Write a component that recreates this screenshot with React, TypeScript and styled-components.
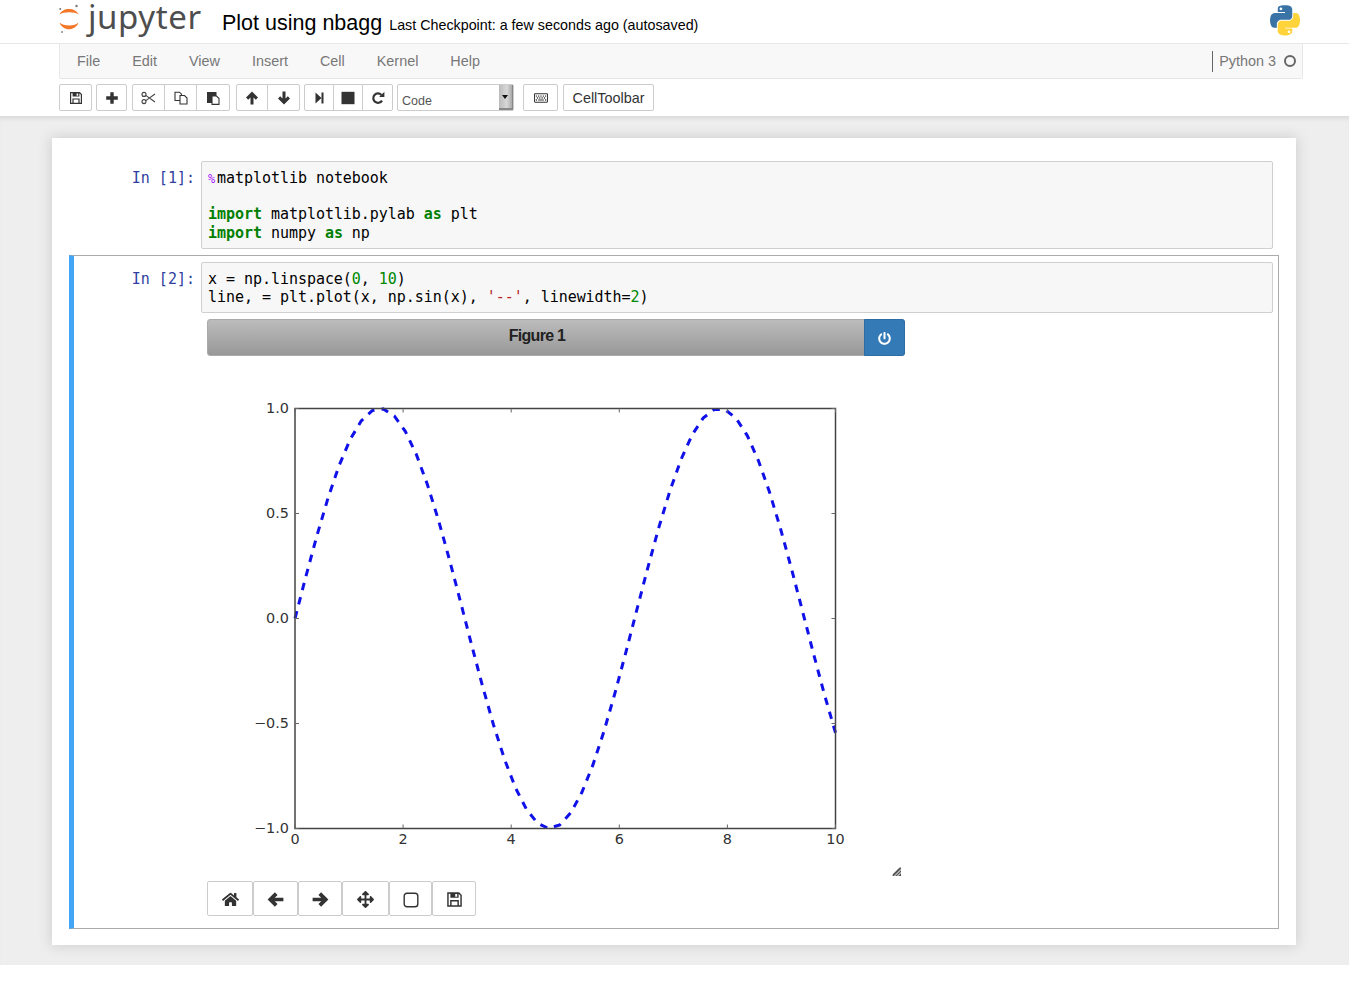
import React from "react";
import styled, { createGlobalStyle } from "styled-components";
import { FaRegKeyboard, FaHome, FaArrowsAlt, FaPowerOff } from "react-icons/fa";

const GlobalStyle = createGlobalStyle`
  html, body { margin: 0; padding: 0; background: #fff; overflow: hidden; }
  body { font-family: "Liberation Sans", Arial, sans-serif; color: #000; }
`;

const MONO = `"DejaVu Sans Mono", "Liberation Mono", monospace`;

const menuItems = ["File", "Edit", "View", "Insert", "Cell", "Kernel", "Help"];

// plot geometry, in the coordinates of the canvas below the figure title
const AX = { left: 88, right: 628.5, top: 52.5, bottom: 472.5 };

const sinePath = () => {
  const pts: string[] = [];
  for (let i = 0; i < 50; i++) {
    const x = (i * 10) / 49;
    const px = AX.left + (x / 10) * (AX.right - AX.left);
    const py = AX.top + ((1 - Math.sin(x)) / 2) * (AX.bottom - AX.top);
    pts.push(`${i === 0 ? "M" : "L"}${px.toFixed(2)} ${py.toFixed(2)}`);
  }
  return pts.join(" ");
};

const LEFT_ARROW = "M0.5 7L6.5 1L8.7 3.2L6.4 5.5H13.5V8.5H6.4L8.7 10.8L6.5 13Z";

// font-awesome 4 style glyphs, these are heavier than what the icon packs have
const SaveIcon: React.FC<{ size?: number }> = ({ size = 14 }) => (
  <svg width={size} height={size} viewBox="0 0 14 14">
    <path
      fillRule="evenodd"
      fill="#333"
      d="M1 1H10.8L13 3.2V13H1ZM2.2 2.2V11.8H3.4V7.4H10.6V11.8H11.8V3.7L10.4 2.3V5.6H3.6V2.2ZM4.6 8.6V11.8H9.4V8.6ZM7.6 2.4V4.8H9.2V2.4Z"
    />
  </svg>
);

const PlusIcon = () => (
  <svg width="14" height="14" viewBox="0 0 14 14">
    <path fill="#333" d="M5.3 1.2h3.4v4.1h4.1v3.4h-4.1v4.1h-3.4v-4.1h-4.1v-3.4h4.1z" />
  </svg>
);

const ScissorsIcon = () => (
  <svg width="15" height="14" viewBox="0 0 15 14" fill="none" stroke="#444" strokeWidth="1.1">
    <circle cx="3" cy="3.4" r="2" />
    <circle cx="3" cy="10.6" r="2" />
    <path d="M4.8 4.4L14 11M4.8 9.6L14 3" />
  </svg>
);

const CopyIcon = () => (
  <svg width="14" height="14" viewBox="0 0 14 14" fill="#fff" stroke="#333" strokeWidth="1.1">
    <path d="M1 1.2H5.5L7.5 3.2V9.5H1Z" />
    <path d="M6 4.5H10.5L13 7V13H6Z" />
  </svg>
);

const PasteIcon = () => (
  <svg width="14" height="14" viewBox="0 0 14 14">
    <rect x="1" y="1" width="9.5" height="11" fill="#333" />
    <path d="M6 5H10.5L13 7.5V13.4H6Z" fill="#fff" stroke="#333" strokeWidth="1.1" />
  </svg>
);

const ArrowIcon: React.FC<{ turn: number; size?: number }> = ({ turn, size = 14 }) => (
  <svg width={size} height={size} viewBox="0 0 14 14">
    <path fill="#333" d={LEFT_ARROW} transform={`rotate(${turn} 7 7)`} />
  </svg>
);

const StepIcon = () => (
  <svg width="14" height="14" viewBox="0 0 14 14">
    <path fill="#333" d="M3.5 1.5L9.5 7L3.5 12.5ZM9.5 1.5H11.5V12.5H9.5Z" />
  </svg>
);

const StopIcon = () => (
  <svg width="14" height="14" viewBox="0 0 14 14">
    <rect x="0.5" y="0.8" width="13" height="12.4" fill="#333" />
  </svg>
);

const RepeatIcon = () => (
  <svg width="14" height="14" viewBox="0 0 14 14">
    <path d="M11 9.6A4.7 4.7 0 1 1 10.4 3.9" fill="none" stroke="#333" strokeWidth="2.2" />
    <path d="M8.2 6L13.4 6L13.4 0.8Z" fill="#333" />
  </svg>
);

const SquareIcon = () => (
  <svg width="16" height="16" viewBox="0 0 16 16">
    <rect x="1.2" y="1.2" width="13.6" height="13.6" rx="2.8" fill="none" stroke="#333" strokeWidth="1.4" />
  </svg>
);

const JupyterLogo = () => (
  <svg width="24" height="30" viewBox="0 0 24 30">
    <path d="M1.5 11.5C4 4 18 4 20.5 11.5C17 8.5 5.5 8.5 1.5 11.5Z" fill="#f37726" />
    <path d="M1.5 19.5C4.5 28.5 17.5 28.5 20.5 19.5C17 23.5 5.5 23.5 1.5 19.5Z" fill="#f37726" />
    <circle cx="18.5" cy="3" r="1.2" fill="#767677" />
    <circle cx="2.2" cy="6" r="1" fill="#767677" />
    <circle cx="4" cy="29" r="1" fill="#8a8a8a" />
  </svg>
);

const PythonLogo = () => (
  <svg width="30" height="31" viewBox="0 0 111 113">
    <path
      fill="#3a73a6"
      d="M54.92 0C50.34 0.02 45.96 0.41 42.11 1.09C30.76 3.10 28.70 7.30 28.70 15.03V25.25H55.51V28.66H18.64C10.85 28.66 4.03 33.34 1.90 42.25C-0.56 52.46 -0.67 58.83 1.90 69.47C3.80 77.40 8.34 83.03 16.14 83.03H25.36V70.78C25.36 61.93 33.02 54.13 42.11 54.13H68.89C76.35 54.13 82.30 47.99 82.30 40.50V15.03C82.30 7.77 76.18 2.32 68.89 1.09C64.28 0.33 59.50 -0.02 54.92 0ZM40.42 8.22C43.19 8.22 45.45 10.52 45.45 13.35C45.45 16.17 43.19 18.45 40.42 18.45C37.64 18.45 35.39 16.17 35.39 13.35C35.39 10.52 37.64 8.22 40.42 8.22Z"
    />
    <path
      fill="#ffd43b"
      d="M85.64 28.66V40.57C85.64 49.80 77.81 57.57 68.89 57.57H42.11C34.78 57.57 28.70 63.85 28.70 71.19V96.73C28.70 103.99 35.02 108.26 42.11 110.35C50.61 112.85 58.75 113.30 68.89 110.35C75.64 108.39 82.30 104.45 82.30 96.73V86.50H55.51V83.09H95.70C103.49 83.09 106.40 77.65 109.11 69.47C111.91 61.04 111.79 52.94 109.11 42.25C107.18 34.55 103.50 28.66 95.70 28.66H85.64ZM70.58 93.31C73.36 93.31 75.61 95.59 75.61 98.41C75.61 101.24 73.36 103.54 70.58 103.54C67.80 103.54 65.55 101.24 65.55 98.41C65.55 95.59 67.80 93.31 70.58 93.31Z"
    />
  </svg>
);

const Plot = () => {
  const w = AX.right - AX.left;
  const h = AX.bottom - AX.top;
  const xTicks = [0, 2, 4, 6, 8, 10];
  const yTicks = [1, 0.5, 0, -0.5, -1];
  return (
    <svg width="698" height="525" viewBox="0 0 698 525">
      <path d={sinePath()} fill="none" stroke="#1010e8" strokeWidth="3" strokeDasharray="7.5 7.1" />
      <rect x={AX.left} y={AX.top} width={w} height={h} fill="none" stroke="#444" strokeWidth="1.5" />
      {xTicks.map((t) => {
        const x = AX.left + (t / 10) * w;
        return (
          <g key={t}>
            <line x1={x} x2={x} y1={AX.top} y2={AX.top + 4} stroke="#666" />
            <line x1={x} x2={x} y1={AX.bottom} y2={AX.bottom - 4} stroke="#666" />
            <TickLabel x={x} y={AX.bottom + 15} textAnchor="middle">{t}</TickLabel>
          </g>
        );
      })}
      {yTicks.map((t) => {
        const y = AX.top + ((1 - t) / 2) * h;
        const label = (t < 0 ? "\u2212" : "") + Math.abs(t).toFixed(1);
        return (
          <g key={t}>
            <line x1={AX.left} x2={AX.left + 4} y1={y} y2={y} stroke="#666" />
            <line x1={AX.right} x2={AX.right - 4} y1={y} y2={y} stroke="#666" />
            <TickLabel x={AX.left - 6} y={y + 4.5} textAnchor="end">{label}</TickLabel>
          </g>
        );
      })}
    </svg>
  );
};

const App: React.FC = () => {
  return (
    <Page>
      <GlobalStyle />
      <Header>
        <LogoWrap>
          <JupyterLogo />
          <Wordmark>jupyter</Wordmark>
        </LogoWrap>
        <NotebookName>Plot using nbagg</NotebookName>
        <Checkpoint>Last Checkpoint: a few seconds ago (autosaved)</Checkpoint>
        <KernelLogo>
          <PythonLogo />
        </KernelLogo>
      </Header>

      <MenuBar>
        {menuItems.map((item) => (
          <MenuItem key={item}>{item}</MenuItem>
        ))}
        <KernelName>Python 3</KernelName>
        <KernelStatus />
      </MenuBar>

      <Toolbar>
        <BtnGroup $mr={4}>
          <ToolBtn $w={33}><SaveIcon /></ToolBtn>
        </BtnGroup>
        <BtnGroup $mr={5}>
          <ToolBtn $w={31}><PlusIcon /></ToolBtn>
        </BtnGroup>
        <BtnGroup $mr={6}>
          <ToolBtn $w={33}><ScissorsIcon /></ToolBtn>
          <ToolBtn $w={33}><CopyIcon /></ToolBtn>
          <ToolBtn $w={34}><PasteIcon /></ToolBtn>
        </BtnGroup>
        <BtnGroup $mr={4}>
          <ToolBtn $w={32}><ArrowIcon turn={90} /></ToolBtn>
          <ToolBtn $w={33}><ArrowIcon turn={-90} /></ToolBtn>
        </BtnGroup>
        <BtnGroup $mr={4}>
          <ToolBtn $w={30}><StepIcon /></ToolBtn>
          <ToolBtn $w={30}><StopIcon /></ToolBtn>
          <ToolBtn $w={31}><RepeatIcon /></ToolBtn>
        </BtnGroup>
        <CellSelect>
          <SelectText>Code</SelectText>
          <SelectArrow />
        </CellSelect>
        <BtnGroup $ml={9} $mr={5}>
          <ToolBtn $w={35}><FaRegKeyboard /></ToolBtn>
        </BtnGroup>
        <BtnGroup>
          <TextBtn>CellToolbar</TextBtn>
        </BtnGroup>
      </Toolbar>

      <Site>
        <Notebook>
          <Cell>
            <Prompt>In [1]:</Prompt>
            <CellBody>
              <Input>
                <Magic>%</Magic>matplotlib notebook{"\n\n"}
                <Kw>import</Kw> matplotlib.pylab <Kw>as</Kw> plt{"\n"}
                <Kw>import</Kw> numpy <Kw>as</Kw> np
              </Input>
            </CellBody>
          </Cell>
          <Cell $selected>
            <Prompt>In [2]:</Prompt>
            <CellBody>
              <Input>
                x = np.linspace(<Num>0</Num>, <Num>10</Num>){"\n"}
                line, = plt.plot(x, np.sin(x), <Str>'--'</Str>, linewidth=<Num>2</Num>)
              </Input>
              <Figure>
                <FigureHeader>
                  <FigureTitle>Figure 1</FigureTitle>
                  <PowerBtn><FaPowerOff /></PowerBtn>
                </FigureHeader>
                <Canvas>
                  <Plot />
                  <ResizeHandle viewBox="0 0 9 9" width="9" height="9">
                    <path d="M0 9L9 0V2L2 9ZM3 9L9 3V5L5 9ZM6 9L9 6V9Z" fill="#555" />
                    <path d="M1 8L8 1" stroke="#555" strokeWidth="1.2" />
                  </ResizeHandle>
                </Canvas>
                <FigureToolbar>
                  <FigBtn $w={46}><FaHome /></FigBtn>
                  <FigBtn $w={45}><ArrowIcon turn={0} size={17} /></FigBtn>
                  <FigBtn $w={44}><ArrowIcon turn={180} size={17} /></FigBtn>
                  <FigBtn $w={47}><FaArrowsAlt /></FigBtn>
                  <FigBtn $w={43}><SquareIcon /></FigBtn>
                  <FigBtn $w={44}><SaveIcon size={17} /></FigBtn>
                </FigureToolbar>
              </Figure>
            </CellBody>
          </Cell>
        </Notebook>
      </Site>
    </Page>
  );
};

const Page = styled.div`
  height: 1001px;
  overflow: hidden;
  background: #fff;
`;

const Header = styled.header`
  height: 43px;
  border-bottom: 1px solid #e7e7e7;
  padding-left: 58px;
  display: flex;
  align-items: flex-start;
  position: relative;
`;

const LogoWrap = styled.div`
  display: flex;
  align-items: center;
  width: 164px;
  height: 36px;
  gap: 6px;
`;

const Wordmark = styled.span`
  font-family: "Noto Sans", "Open Sans", sans-serif;
  font-size: 33px;
  line-height: 36px;
  color: #4e4e4e;
  letter-spacing: 0.6px;
  margin-top: -3px;
`;

const NotebookName = styled.span`
  font-size: 21.5px;
  line-height: 23px;
  margin-top: 12px;
`;

const Checkpoint = styled.span`
  font-size: 14.3px;
  line-height: 16px;
  margin: 17px 0 0 7px;
`;

const KernelLogo = styled.div`
  position: absolute;
  left: 1270px;
  top: 5px;
`;

const MenuBar = styled.nav`
  margin-left: 59px;
  width: 1244px;
  height: 35px;
  box-sizing: border-box;
  background: #f8f8f8;
  border: 1px solid #e7e7e7;
  border-top: none;
  border-radius: 0 0 2px 2px;
  display: flex;
  align-items: center;
  padding-left: 1px;
`;

const MenuItem = styled.span`
  font-size: 14.4px;
  color: #777;
  padding: 0 16px;
`;

const KernelName = styled.span`
  margin-left: auto;
  border-left: 1px solid #666;
  padding-left: 6px;
  font-size: 14.4px;
  line-height: 21px;
  color: #777;
`;

const KernelStatus = styled.span`
  box-sizing: border-box;
  width: 12px;
  height: 12px;
  border: 2px solid #666;
  border-radius: 50%;
  margin: 0 6px 0 8px;
`;

const Toolbar = styled.div`
  height: 27px;
  padding: 5px 0 5px 59px;
  display: flex;
  align-items: stretch;
`;

const BtnGroup = styled.div<{ $ml?: number; $mr?: number }>`
  display: flex;
  margin-right: ${(p) => p.$mr ?? 0}px;
  margin-left: ${(p) => p.$ml ?? 0}px;
`;

const ToolBtn = styled.button<{ $w: number }>`
  width: ${(p) => p.$w}px;
  padding: 0;
  margin: 0;
  background: #fff;
  border: 1px solid #ccc;
  margin-left: -1px;
  color: #333;
  font-size: 14px;
  display: flex;
  align-items: center;
  justify-content: center;

  &:first-child {
    margin-left: 0;
    border-radius: 2px 0 0 2px;
  }
  &:last-child {
    border-top-right-radius: 2px;
    border-bottom-right-radius: 2px;
  }
`;

const TextBtn = styled.button`
  width: 91px;
  padding: 0;
  background: #fff;
  border: 1px solid #ccc;
  border-radius: 2px;
  color: #333;
  font-family: inherit;
  font-size: 14.4px;
`;

const CellSelect = styled.div`
  width: 117px;
  box-sizing: border-box;
  background: #fff;
  border: 1px solid #ccc;
  border-radius: 2px;
  display: flex;
  justify-content: space-between;
  align-items: stretch;
`;

const SelectText = styled.span`
  font-size: 12.5px;
  color: #555;
  padding: 9px 0 0 4px;
  line-height: 14px;
`;

const SelectArrow = styled.span`
  width: 13px;
  background: linear-gradient(90deg, #bbb, #d8d8d8 60%, #aaa);
  border-bottom: 2px solid #888;
  border-right: 1px solid #888;
  position: relative;

  &::after {
    content: "";
    position: absolute;
    left: 3px;
    top: 10px;
    border-left: 3px solid transparent;
    border-right: 3px solid transparent;
    border-top: 4px solid #111;
  }
`;

const Site = styled.main`
  height: 849px;
  box-sizing: border-box;
  background: #eee;
  padding-top: 22px;
  box-shadow: inset 0 5px 5px -3px rgba(0, 0, 0, 0.1);
`;

const Notebook = styled.div`
  margin-left: 52px;
  width: 1244px;
  height: 807px;
  box-sizing: border-box;
  background: #fff;
  padding: 17px 17px 16px;
  box-shadow: 0 0 12px 1px rgba(87, 87, 87, 0.2);
`;

const Cell = styled.div<{ $selected?: boolean }>`
  display: flex;
  padding: 6px 5px 6px 0;
  box-sizing: border-box;
  ${(p) =>
    p.$selected
      ? `
    border: 1px solid #ababab;
    border-left: 5px solid #42a5f5;
    height: 674px;
  `
      : `
    border: 1px solid transparent;
    border-left: 5px solid transparent;
    padding-top: 5px;
    padding-bottom: 5px;
  `}
`;

const Prompt = styled.div`
  width: 127px;
  flex-shrink: 0;
  box-sizing: border-box;
  padding: 8px 6px 0 0;
  text-align: right;
  font-family: ${MONO};
  font-size: 15px;
  line-height: 18.2px;
  color: #303f9f;
`;

const CellBody = styled.div`
  flex: 1;
  min-width: 0;
`;

const Input = styled.pre`
  margin: 0;
  background: #f7f7f7;
  border: 1px solid #cfcfcf;
  border-radius: 2px;
  padding: 7px 6px 6px;
  font-family: ${MONO};
  font-size: 15px;
  letter-spacing: -0.04px;
  line-height: 18.2px;
  color: #000;
`;

const Magic = styled.span`
  display: inline-block;
  width: 9px;
  color: #a2f;
  font-size: 12px;
  line-height: 1;
`;

const Kw = styled.span`
  color: #008000;
  font-weight: bold;
`;

const Num = styled.span`
  color: #080;
`;

const Str = styled.span`
  color: #ba2121;
`;

const Figure = styled.div`
  margin: 6px 0 0 6px;
  width: 698px;
`;

const FigureHeader = styled.div`
  height: 37px;
  box-sizing: border-box;
  display: flex;
  border: 1px solid #aaa;
  border-radius: 3px;
  background: linear-gradient(180deg, #bcbcbc, #989898);
`;

const FigureTitle = styled.div`
  flex: 1;
  padding-left: 2px;
  text-align: center;
  font-size: 16px;
  font-weight: bold;
  letter-spacing: -0.7px;
  line-height: 32px;
  color: #222;
`;

const PowerBtn = styled.button`
  width: 41px;
  margin: -1px -1px -1px 0;
  padding: 2px 0 0;
  border: 1px solid #2e6da4;
  border-radius: 0 3px 3px 0;
  background: #337ab7;
  color: #fff;
  font-size: 13px;
  display: flex;
  align-items: center;
  justify-content: center;
`;

const Canvas = styled.div`
  position: relative;
  height: 525px;
`;

const ResizeHandle = styled.svg`
  position: absolute;
  right: 4px;
  bottom: 5px;
`;

const TickLabel = styled.text`
  font-family: "DejaVu Sans", sans-serif;
  font-size: 14.4px;
  fill: #333;
`;

const FigureToolbar = styled.div`
  display: flex;
  height: 35px;
`;

const FigBtn = styled.button<{ $w: number }>`
  width: ${(p) => p.$w}px;
  padding: 2px 0 0;
  background: #fff;
  border: 1px solid #ccc;
  border-radius: 2px;
  color: #333;
  font-size: 17px;
  display: flex;
  align-items: center;
  justify-content: center;
`;

export default App;
